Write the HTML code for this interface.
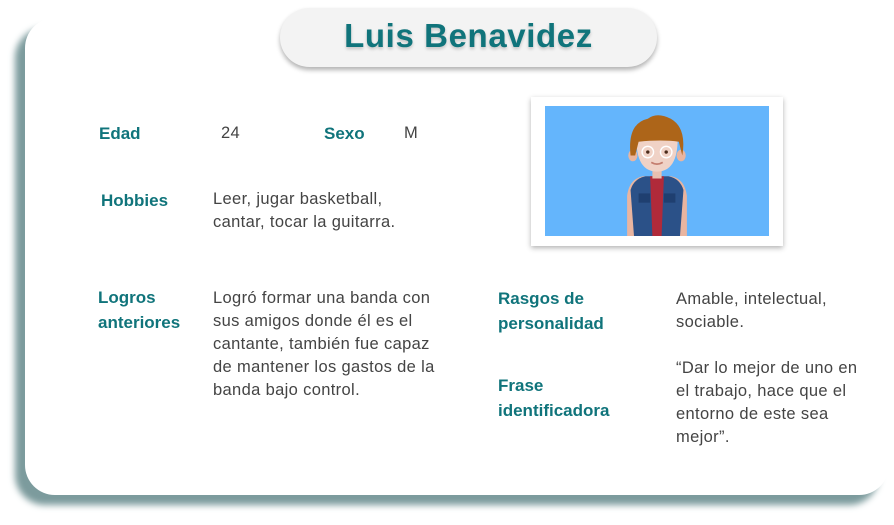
<!DOCTYPE html>
<html><head><meta charset="utf-8"><style>
*{margin:0;padding:0}
body{width:894px;height:525px;background:#fff;position:relative;overflow:hidden;font-family:"Liberation Sans",sans-serif}
.card{position:absolute;left:25px;top:18px;width:864px;height:477px;background:#fff;border-radius:30px;box-shadow:-10px 10px 7px #7c9b9d}
.pill{position:absolute;left:280px;top:8px;width:377px;height:59px;background:#f3f3f3;border-radius:30px;box-shadow:0 3px 5px rgba(0,0,0,.3);text-align:center;line-height:56px;font-size:33px;letter-spacing:0.6px;font-weight:bold;color:#10747b;text-shadow:0 2px 3px rgba(0,0,0,.2)}
.t{position:absolute;font-size:16.5px;letter-spacing:0.35px;color:#444;line-height:23px;white-space:nowrap}
.l{position:absolute;font-size:17px;font-weight:bold;color:#10747b;line-height:25px;white-space:nowrap}
.frame{position:absolute;left:531px;top:97px;width:252px;height:149px;background:#fff;box-shadow:0 2px 5px rgba(0,0,0,.3)}
</style></head><body>
<div class="card"></div>
<div class="pill">Luis Benavidez</div>
<div class="l" style="left:99px;top:121px">Edad</div>
<div class="t" style="left:221px;top:122px">24</div>
<div class="l" style="left:324px;top:121px">Sexo</div>
<div class="t" style="left:404px;top:122px">M</div>
<div class="l" style="left:101px;top:188px">Hobbies</div>
<div class="t" style="left:213px;top:188px">Leer, jugar basketball,<br>cantar, tocar la guitarra.</div>
<div class="l" style="left:98px;top:285px">Logros<br>anteriores</div>
<div class="t" style="left:213px;top:287px">Logró formar una banda con<br>sus amigos donde él es el<br>cantante, también fue capaz<br>de mantener los gastos de la<br>banda bajo control.</div>
<div class="l" style="left:498px;top:286px">Rasgos de<br>personalidad</div>
<div class="t" style="left:676px;top:288px">Amable, intelectual,<br>sociable.</div>
<div class="l" style="left:498px;top:373px">Frase<br>identificadora</div>
<div class="t" style="left:676px;top:357px">“Dar lo mejor de uno en<br>el trabajo, hace que el<br>entorno de este sea<br>mejor”.</div>
<div class="frame">
<svg style="position:absolute;left:14px;top:9px" width="224" height="130" viewBox="0 0 224 130">
<rect width="224" height="130" fill="#64b5fc"/>
<g transform="translate(112 130) scale(1.15) translate(-112 -130)">
<path d="M86 130 L86 95 Q88 80 100 78 L124 78 Q136 80 138 95 L138 130 Z" fill="#e9b5a0"/>
<path d="M92 130 L89 90 Q92 80 102 78 L122 78 Q132 80 135 90 L132 130 Z" fill="#2b5188"/>
<path d="M106 78 L118 78 L116 130 L108 130 Z" fill="#b02a3a"/>
<rect x="96" y="93" width="10" height="8" fill="#1f3f70"/><rect x="118" y="93" width="10" height="8" fill="#1f3f70"/>
<rect x="108" y="66" width="8" height="14" fill="#e9c0b0"/>
<ellipse cx="91" cy="60" rx="4" ry="5" fill="#e9b5a0"/><ellipse cx="133" cy="60" rx="4" ry="5" fill="#e9b5a0"/>
<path d="M94 45 Q94 74 112 74 Q130 74 130 45 Z" fill="#f0d2c6"/>
<path d="M89 60 Q86 32 104 28 Q112 22 124 28 Q138 36 134 60 L131 48 Q116 46 96 48 L93 60 Z" fill="#ad6519"/>
<circle cx="104" cy="57" r="5" fill="none" stroke="#fff" stroke-width="1.2"/><circle cx="120" cy="57" r="5" fill="none" stroke="#fff" stroke-width="1.2"/>
<circle cx="104" cy="57" r="1.5" fill="#4a2a1a"/><circle cx="120" cy="57" r="1.5" fill="#4a2a1a"/>
<path d="M107 66 Q112 69 117 66" stroke="#c47d6e" stroke-width="1.5" fill="none"/>
</g>
</svg>
</div>
</body></html>
